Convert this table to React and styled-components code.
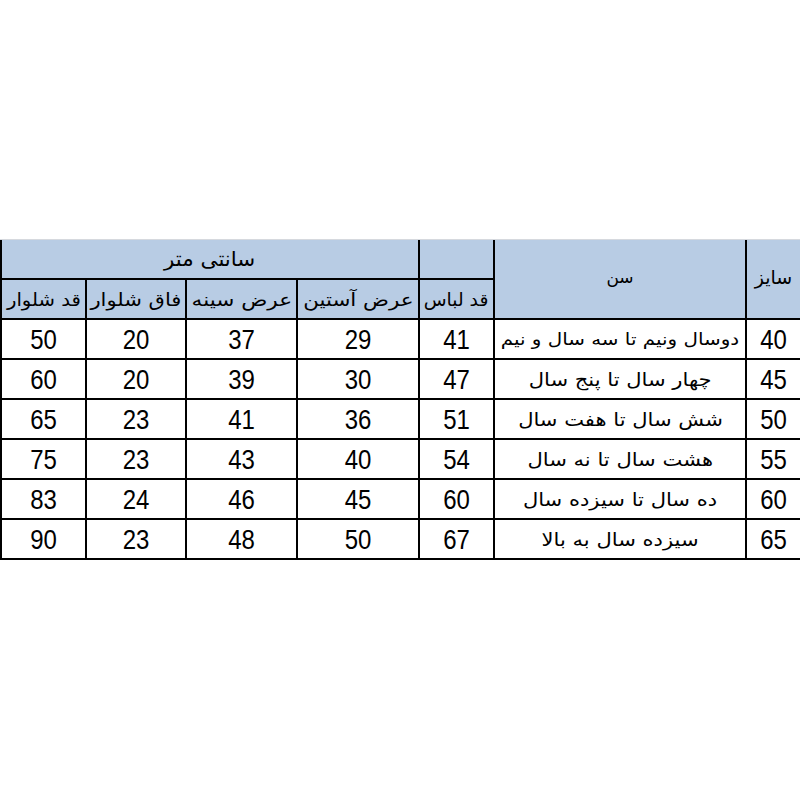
import React from 'react';
import styled, { createGlobalStyle } from 'styled-components';

const GlobalStyle = createGlobalStyle`
  html, body {
    margin: 0;
    padding: 0;
    background: #fff;
  }
  * {
    box-sizing: border-box;
  }
`;

const Page = styled.div`
  width: 800px;
  height: 800px;
  overflow: hidden;
  padding-top: 239px;
  background: #fff;
`;

const Grid = styled.div`
  direction: rtl;
  display: grid;
  grid-template-columns: 55px 252px 75px 122px 111px 100px 85px;
  grid-auto-rows: 40px;
  width: 800px;
  border-top: 1px solid #d6d9de;
`;

const Cell = styled.div`
  display: flex;
  align-items: center;
  justify-content: center;
  border-left: 2px solid #000;
  border-bottom: 2px solid #000;
  background: ${({ head }) => (head ? '#b8cce4' : '#fff')};
  color: #000;
  white-space: nowrap;
  overflow: hidden;
  grid-column: ${({ span }) => (span ? `span ${span}` : 'auto')};
  grid-row: ${({ rows }) => (rows ? `span ${rows}` : 'auto')};
  padding-bottom: ${({ rows }) => (rows ? '4px' : '0')};
`;

const Farsi = styled.span`
  display: inline-block;
  font-family: "DejaVu Sans", sans-serif;
  font-size: ${({ size }) => size || 18}px;
  transform: scaleX(${({ stretch }) => stretch || 1});
`;

const Num = styled.span`
  font-family: "Liberation Sans", Arial, sans-serif;
  font-size: 24px;
  display: inline-block;
  transform: scaleY(1.12);
  padding-top: 2px;
`;

const rows = [
  ['40', 'دوسال ونیم تا سه سال و نیم', '41', '29', '37', '20', '50'],
  ['45', 'چهار سال تا پنج سال', '47', '30', '39', '20', '60'],
  ['50', 'شش سال تا هفت سال', '51', '36', '41', '23', '65'],
  ['55', 'هشت سال تا نه سال', '54', '40', '43', '23', '75'],
  ['60', 'ده سال تا سیزده سال', '60', '45', '46', '24', '83'],
  ['65', 'سیزده سال به بالا', '67', '50', '48', '23', '90'],
];

const subHeads = [
  { text: 'قد لباس', stretch: 1.04 },
  { text: 'عرض آستین', stretch: 1.19 },
  { text: 'عرض سینه', stretch: 1.2 },
  { text: 'فاق شلوار', stretch: 1.17 },
  { text: 'قد شلوار', stretch: 1.09 },
];

export default function App() {
  return (
    <Page>
      <GlobalStyle />
      <Grid>
        <Cell head rows={2}><Farsi size={19}>سایز</Farsi></Cell>
        <Cell head rows={2}><Farsi size={17}>سن</Farsi></Cell>
        <Cell head />
        <Cell head span={4}><Farsi size={20} stretch={1.07}>سانتی متر</Farsi></Cell>
        {subHeads.map((h) => (
          <Cell head key={h.text}><Farsi stretch={h.stretch}>{h.text}</Farsi></Cell>
        ))}
        {rows.map((r) =>
          r.map((v, i) => (
            <Cell key={r[0] + '-' + i}>
              {i === 1 ? (
                <Farsi size={r[0] === '40' ? 17 : 18} stretch={1.17}>{v}</Farsi>
              ) : (
                <Num>{v}</Num>
              )}
            </Cell>
          ))
        )}
      </Grid>
    </Page>
  );
}
